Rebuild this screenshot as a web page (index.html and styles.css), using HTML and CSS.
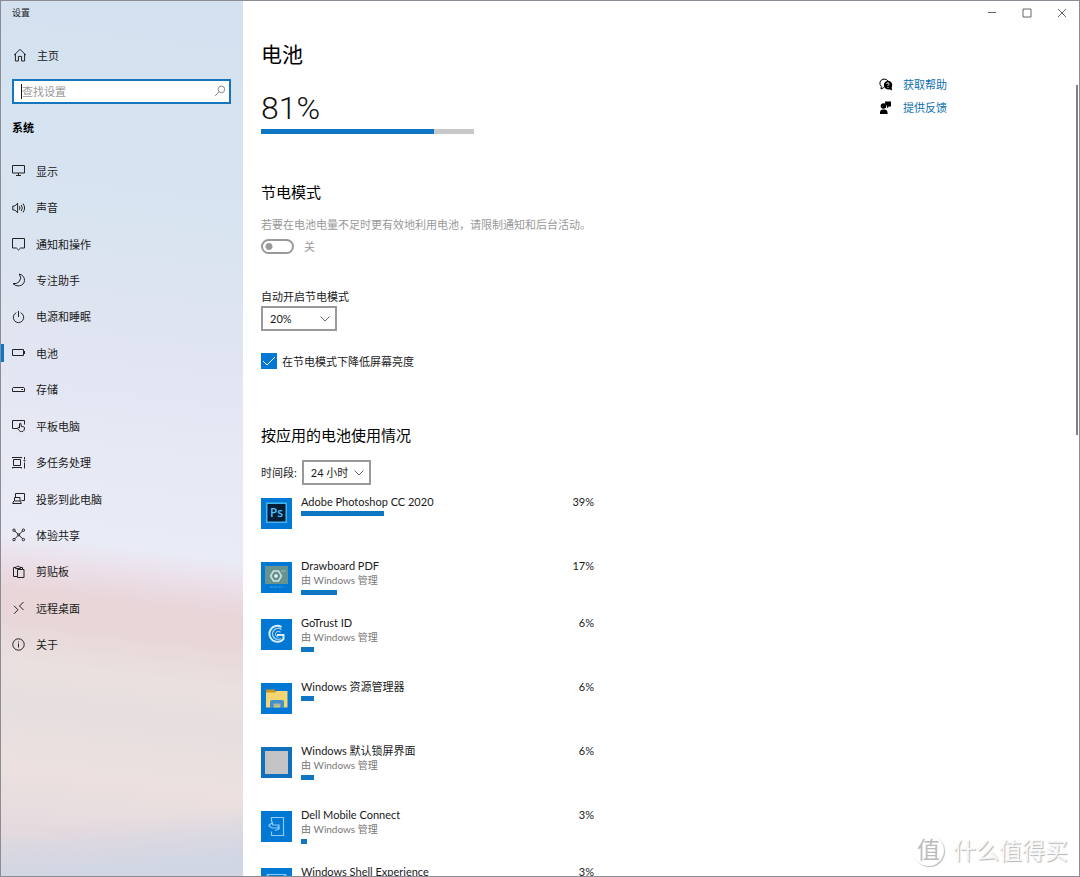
FILE: index.html
```html
<!DOCTYPE html>
<html lang="zh-CN">
<head>
<meta charset="utf-8">
<title>设置</title>
<meta name="viewport" content="width=device-width, initial-scale=1">
<link rel="stylesheet" href="styles.css">
</head>
<body>
<div class="window">
  <aside class="sidebar">
    <div class="window-title">设置</div>
    <a class="home" href="#">
      <svg class="icon" viewBox="0 0 14 14"><path d="M1 7.2 7 1.4l6 5.8M2.4 6v7h3V8.4h3.2V13h3V6"/></svg>
      <span>主页</span>
    </a>
    <label class="search">
      <input type="text" placeholder="查找设置" aria-label="查找设置">
      <span class="caret"></span>
      <svg class="search-icon" viewBox="0 0 12 12"><circle cx="7.4" cy="4.4" r="3.3"/><path d="M5 6.8 1.2 10.8"/></svg>
    </label>
    <h2 class="group">系统</h2>
    <nav class="nav">
      <a href="#"><svg class="icon" viewBox="0 0 14 14"><path d="M.5 1.500h12v7.500H.5zM6.500 9v2.500M4 11.500h5"/></svg><span>显示</span></a>
      <a href="#"><svg class="icon" viewBox="0 0 14 14"><path d="M.8 5v4h2L5.600 11.800V2.200L2.800 5zM7.400 5.200q1.200 1.800 0 3.600M9.200 3.900q2.200 3.100 0 6.200M11 2.600q3.200 4.400 0 8.800"/></svg><span>声音</span></a>
      <a href="#"><svg class="icon" viewBox="0 0 14 14"><path d="M.5 1.500h12v9.500H8.600l-2.100 2-2.100-2H.5z"/></svg><span>通知和操作</span></a>
      <a href="#"><svg class="icon" viewBox="0 0 14 14"><path d="M7.400 1q2.800 4.600-.2 7.700-2.500 2.500-6.200 1.900 2.600 2.800 6.400 2.300 4.600-1 5.100-5.400Q12.600 2.600 7.400 1z"/></svg><span>专注助手</span></a>
      <a href="#"><svg class="icon" viewBox="0 0 14 14"><path d="M6.500 1v6M4.300 2.700a5.200 5.200 0 1 0 4.400 0"/></svg><span>电源和睡眠</span></a>
      <a class="current" href="#" aria-current="page"><svg class="icon" viewBox="0 0 14 14"><path d="M.5 3.500h11v6H.5zM12.500 5v3"/></svg><span>电池</span></a>
      <a href="#"><svg class="icon" viewBox="0 0 14 14"><path d="M1.200 4.500h10.600l.7.700v3.300H.5V5.200zM9.500 6.500h1.500"/></svg><span>存储</span></a>
      <a href="#"><svg class="icon" viewBox="0 0 14 14"><path d="M5.500 9.500h-5v-8h12v4M7.500 9V4.700q.8-1 1.600 0v2.500l2.700.7q.8.300.7 1.100l-.4 2.200q-.8 1.500-2.600 1.400-1.600 0-2.400-1.200L5.400 9.200q.5-1.200 1.500-.6z"/></svg><span>平板电脑</span></a>
      <a href="#"><svg class="icon" viewBox="0 0 14 14"><path d="M1.500 3.500h7v6h-7zM.5 1v1.200M9.500 1v1.200M.5 1.500h9M.5 12.500v-1.200M9.500 12.500v-1.200M.5 11.500h9M12.500 1v2M12.500 6.500v6"/><circle cx="12.500" cy="4.500" r=".6"/></svg><span>多任务处理</span></a>
      <a href="#"><svg class="icon" viewBox="0 0 14 14"><path d="M3.500 5.500v-4h9v7H9.500M2.500 5.500h5.500v3.500h-5.500zM1.700 9 .7 11.500h8.600L8.500 9"/></svg><span>投影到此电脑</span></a>
      <a href="#"><svg class="icon" viewBox="0 0 14 14"><path d="M2.800 3l3 3h1.800l3-3M2.800 10.800l3-3h1.800l3 3M5.800 6v1.800M7.600 6v1.800"/><circle cx="2" cy="2.200" r="1.200"/><circle cx="11.400" cy="2.200" r="1.200"/><circle cx="2" cy="11.600" r="1.200"/><circle cx="11.400" cy="11.600" r="1.200"/></svg><span>体验共享</span></a>
      <a href="#"><svg class="icon" viewBox="0 0 14 14"><path d="M5.500 11.500h-4v-9h2M8.500 2.500h2v2M3.500 3.500V2h1Q6 0 7.500 2h1v1.500zM5.500 4.500h6.500v8H5.500z"/></svg><span>剪贴板</span></a>
      <a href="#"><svg class="icon" viewBox="0 0 14 14"><path d="M2 4.800l4 4-4 4M11.500 1l-4 4 4 4"/></svg><span>远程桌面</span></a>
      <a href="#"><svg class="icon" viewBox="0 0 14 14"><circle cx="6.500" cy="6.500" r="5.700"/><path d="M6.500 5.500v4M6.500 3.500v1"/></svg><span>关于</span></a>
    </nav>
  </aside>

  <div class="page">
    <div class="window-controls">
      <button type="button" aria-label="最小化"><svg viewBox="0 0 10 10"><path d="M1 4.500h8"/></svg></button>
      <button type="button" aria-label="最大化"><svg viewBox="0 0 10 10"><path d="M1 1h8v8H1z"/></svg></button>
      <button type="button" aria-label="关闭"><svg viewBox="0 0 10 10"><path d="M1 1l8 8M9 1l-8 8"/></svg></button>
    </div>
    <div class="columns">
      <main class="content">
        <h1>电池</h1>
        <div class="charge">81%</div>
        <div class="meter"><div class="fill" style="width:81%"></div></div>

        <section class="saver">
          <h2>节电模式</h2>
          <p class="hint">若要在电池电量不足时更有效地利用电池，请限制通知和后台活动。</p>
          <label class="switch"><input type="checkbox" disabled><span>关</span></label>
          <label class="field-label" for="threshold">自动开启节电模式</label>
          <div class="select threshold">
            <select id="threshold"><option>20%</option></select>
            <svg viewBox="0 0 10 6"><path d="M.5.500 5 5 9.500.500"/></svg>
          </div>
          <label class="check"><span class="box"><input type="checkbox" checked><svg viewBox="0 0 16 16"><path d="M2 8l4 4 8-8"/></svg></span><span>在节电模式下降低屏幕亮度</span></label>
        </section>

        <section>
          <h2>按应用的电池使用情况</h2>
          <div class="period">
            <label for="period">时间段:</label>
            <div class="select hours">
              <select id="period"><option>24 小时</option></select>
              <svg viewBox="0 0 10 6"><path d="M.5.500 5 5 9.500.500"/></svg>
            </div>
          </div>
          <ul class="apps">
            <li>
              <svg class="tile" viewBox="0 0 31 31"><rect x="5" y="4.500" width="21" height="20.500" fill="#45b5ee"/><rect x="6.500" y="6" width="18" height="17.500" fill="#061d36"/><text x="15.500" y="19" text-anchor="middle" class="ps">Ps</text></svg>
              <div class="usage"><div>Adobe Photoshop CC 2020</div><div class="bar"><div class="fill" style="width:39%"></div></div></div>
              <span>39%</span>
            </li>
            <li class="short">
              <svg class="tile" viewBox="0 0 31 31"><rect x="4" y="4" width="23" height="18" fill="#66928f"/><path d="M12.500 9h5l3 5-3 5h-5l-3-5z" fill="none" stroke="#d3e2e2" stroke-width="1.500"/><circle cx="15" cy="14" r="1.800" fill="#f0f5f5"/><path d="M20.500 9h4" stroke="#a4c4c8"/><path d="M9 25h13" stroke="#4ba0e0" stroke-dasharray="3 1"/></svg>
              <div class="usage"><div>Drawboard PDF</div><div class="sub">由 Windows 管理</div><div class="bar"><div class="fill" style="width:17%"></div></div></div>
              <span>17%</span>
            </li>
            <li>
              <svg class="tile" viewBox="0 0 31 31" fill="none"><path d="M20.500 8A8 8 0 1 0 22.500 20v-4H16" stroke="#d9edfb" stroke-width="2"/><path d="M20.500 10.500a5.500 5.500 0 1 0-.5 9" stroke="#a5d2f6" stroke-width="1.400"/><path d="M19.500 13q-4-1.500-5 1.500-.5 3 3 4" stroke="#c7e3f8"/></svg>
              <div class="usage"><div>GoTrust ID</div><div class="sub">由 Windows 管理</div><div class="bar"><div class="fill" style="width:6%"></div></div></div>
              <span>6%</span>
            </li>
            <li>
              <svg class="tile" viewBox="0 0 31 31"><path d="M5 6.500h8.500l1.500 2h11V24H5z" fill="#c99524"/><path d="M5 9.500 14 9.500l1.500-1.500h11V24.500H5z" fill="#f3d673"/><path d="M9 25v-6q0-2 2-2h10q2 0 2 2v6h-4v-4h-6v4z" fill="#3f92cf"/><path d="M12.500 20.500h7v3h-7z" fill="#b3b691"/></svg>
              <div class="usage"><div>Windows 资源管理器</div><div class="bar"><div class="fill" style="width:6%"></div></div></div>
              <span>6%</span>
            </li>
            <li>
              <svg class="tile lock" viewBox="0 0 31 31"><rect x="4" y="4" width="23" height="23" fill="#c3c3c6"/></svg>
              <div class="usage"><div>Windows 默认锁屏界面</div><div class="sub">由 Windows 管理</div><div class="bar"><div class="fill" style="width:6%"></div></div></div>
              <span>6%</span>
            </li>
            <li class="short">
              <svg class="tile" viewBox="0 0 31 31" fill="none" stroke="#8ecbf7" stroke-width="1.200"><path d="M10.500 11V6.500h12v18h-12V20.500M7.500 14.500l4-3v2.500h6.500v4M7.500 14.500l3.500 2.500h5.500M14 19.500l4-1.500-1.500-2.500"/></svg>
              <div class="usage"><div>Dell Mobile Connect</div><div class="sub">由 Windows 管理</div><div class="bar"><div class="fill" style="width:3%"></div></div></div>
              <span>3%</span>
            </li>
            <li>
              <svg class="tile" viewBox="0 0 31 31" fill="none" stroke="#8ecbf7"><path d="M6 6.500h19v16H6zM6 6.500l3 2.500h13l3-2.500"/></svg>
              <div class="usage"><div>Windows Shell Experience</div></div>
              <span>3%</span>
            </li>
          </ul>
        </section>
      </main>
      <aside class="links">
        <a href="#"><svg viewBox="0 0 14 14"><path d="M5 9.500 2 11l.3-2.700Q.3 6.500 1 4q1.200-2.800 4-3 2.600 0 4 2" fill="none" stroke="#000"/><path d="M8.800 2.800a4.300 4.300 0 0 1 3.900 6.400l.3 3.300-2.600-1.300A4.300 4.300 0 1 1 8.800 2.800z"/><path d="M7.600 6q.2-1.300 1.400-1.200 1.400.3 1 1.500L9 7.500v.7M9 9v1" fill="none" stroke="#fff" stroke-width=".9"/></svg><span>获取帮助</span></a>
        <a href="#"><svg viewBox="0 0 14 14"><circle cx="4.500" cy="5" r="2.800"/><path d="M1 13V11q.3-2.500 2.400-2.500h2.600q2.200 0 2.500 2.500v2zM6 .5H12V5.500H10L8 7.200V5L6 2.500z"/></svg><span>提供反馈</span></a>
      </aside>
    </div>
    <div class="scroll-thumb"></div>
    <div class="watermark"><span class="seal">值</span><span>什么值得买</span></div>
  </div>
</div>
</body>
</html>
```

FILE: styles.css
```css
* { box-sizing: border-box; }

body {
  margin: 0;
  font: 11px/15px Lato, "Noto Sans CJK SC", sans-serif;
  color: #1a1a1a;
  background: #fff;
}

h1, h2, p, ul { margin: 0; padding: 0; font-weight: 400; }
a { color: inherit; text-decoration: none; }
input, select, button { font: inherit; color: inherit; }

.window {
  display: flex;
  height: 100vh;
  overflow: hidden;
  border: 1px solid #8c8c94;
}

/* Sidebar */
.sidebar {
  flex: 0 0 242px;
  padding: 4px 12px 0 11px;
  background:
    linear-gradient(173deg, rgba(208, 214, 228, 0) 92%, rgba(208, 214, 228, 1) 98%),
    linear-gradient(187deg, #d3e1f0 0%, #d8e4f0 26%, #dfe4f1 36%, #e6e8f4 50%, #e9ebf6 62%, #ecdfe8 65%, #e8d6d9 68%, #e8d6d8 71%, #eae0df 76%, #e6dfdf 81%, #ece1df 88%, #e4d9de 95%, #d8d6e0 100%);
}
.window-title { font-size: 9px; line-height: 16px; }
.icon {
  flex: none;
  width: 14px;
  height: 14px;
  fill: none;
  stroke: #222;
}
.home {
  display: flex;
  align-items: center;
  gap: 10px;
  height: 24px;
  margin-top: 22px;
  padding-left: 1px;
}
.search { position: relative; display: block; margin-top: 12px; }
.search input {
  display: block;
  width: 100%;
  height: 25px;
  padding: 0 28px 0 8px;
  border: 2px solid #1576bd;
  border-radius: 0;
  outline: 0;
  background: #fff;
}
.search input::placeholder { color: #999; opacity: 1; }
.caret { position: absolute; left: 9px; top: 5px; width: 1px; height: 15px; background: #111; }
.search-icon {
  position: absolute;
  right: 5px;
  top: 6px;
  width: 12px;
  height: 12px;
  fill: none;
  stroke: #888;
}
.group { margin-top: 16px; font-size: 11px; font-weight: 700; color: #000; }
.nav {
  display: grid;
  grid-auto-rows: 1fr;
  min-height: 510px;
  margin: 18px -12px 0 -11px;
}
.nav a {
  display: flex;
  align-items: center;
  gap: 10px;
  padding-left: 11px;
}
.nav .current {
  background: linear-gradient(#0f76c4, #0f76c4) left center / 3px 18px no-repeat;
}

/* Page */
.page { position: relative; flex: 1; min-width: 0; background: #fff; }
.window-controls { display: flex; justify-content: flex-end; height: 24px; }
.window-controls button {
  display: grid;
  place-items: center;
  width: 35px;
  padding: 0;
  border: 0;
  background: none;
}
.window-controls svg { width: 10px; height: 10px; fill: none; stroke: #666; }
.columns {
  display: flex;
  justify-content: space-between;
  padding: 13px 132px 0 18px;
}
.content { flex: 0 1 333px; min-width: 0; }

h1 { font-size: 21px; line-height: 32px; color: #000; }
.charge {
  margin-top: 18px;
  font: 300 32px/40px Roboto, sans-serif;
  color: #111;
}
.meter { width: 213px; height: 5px; margin-top: 1px; background: #c8c8c8; }
.fill { height: 100%; background: #0f76c4; }
section h2 { font-size: 15px; line-height: 22px; color: #000; }
.saver { margin: 47px 0 55px; }
.hint { margin-top: 14px; color: #999; white-space: nowrap; }
.switch {
  display: flex;
  align-items: center;
  gap: 10px;
  margin-top: 7px;
  color: #999;
}
.switch input {
  appearance: none;
  width: 33px;
  height: 15px;
  margin: 0;
  border: 2px solid #999;
  border-radius: 8px;
  background: radial-gradient(circle at 6px 50%, #999 3px, transparent 4px);
}
.field-label { display: block; margin-top: 35px; }
.select { position: relative; }
.select select {
  appearance: none;
  display: block;
  width: 100%;
  height: 25px;
  padding: 0 7px;
  border: 2px solid #999;
  border-radius: 0;
  background: #fff;
}
.select svg {
  position: absolute;
  right: 7px;
  top: 10px;
  width: 10px;
  height: 6px;
  fill: none;
  stroke: #666;
  pointer-events: none;
}
.threshold { width: 76px; margin-top: 2px; }
.hours { width: 69px; }
.check { display: flex; align-items: center; gap: 5px; margin-top: 22px; }
.box { position: relative; display: block; width: 16px; height: 16px; }
.box input { appearance: none; display: block; width: 16px; height: 16px; margin: 0; background: #0078d4; }
.box svg { position: absolute; inset: 0; fill: none; stroke: #fff; }

.period { display: flex; align-items: center; gap: 5px; margin-top: 14px; }
.apps { list-style: none; margin-top: 9px; }
.apps li { display: flex; align-items: flex-start; gap: 9px; height: 64px; }
.apps .short { height: 57px; }
.tile { flex: none; width: 31px; height: 31px; margin-top: 4px; background: #0078d4; }
.tile.lock { background: #1170bd; }
.ps { font: 600 12px "Open Sans", sans-serif; fill: #4cc3fa; stroke: none; }
.usage { flex: 1; }
.sub { font-size: 10px; color: #777; }
.bar { width: 213px; height: 5px; margin-top: 2px; }

.links { display: grid; gap: 8px; align-content: start; padding-top: 39px; color: #0a6fb0; }
.links a { display: flex; align-items: center; gap: 10px; }
.links svg { width: 14px; height: 14px; fill: #000; }

.scroll-thumb {
  position: absolute;
  right: 1px;
  top: 84px;
  width: 2px;
  height: 40%;
  background: #808080;
}
.watermark {
  position: absolute;
  right: 11px;
  bottom: 10px;
  display: flex;
  align-items: center;
  gap: 9px;
  font-size: 23px;
  line-height: 32px;
  color: #f8f8f8;
  text-shadow: 1px 1px 1px #b4b4b4;
}
.seal {
  width: 31px;
  height: 31px;
  line-height: 29px;
  text-align: center;
  color: #bbb;
  text-shadow: none;
  border-radius: 50%;
  box-shadow: 1px 1px 1px #bbb;
}
```
